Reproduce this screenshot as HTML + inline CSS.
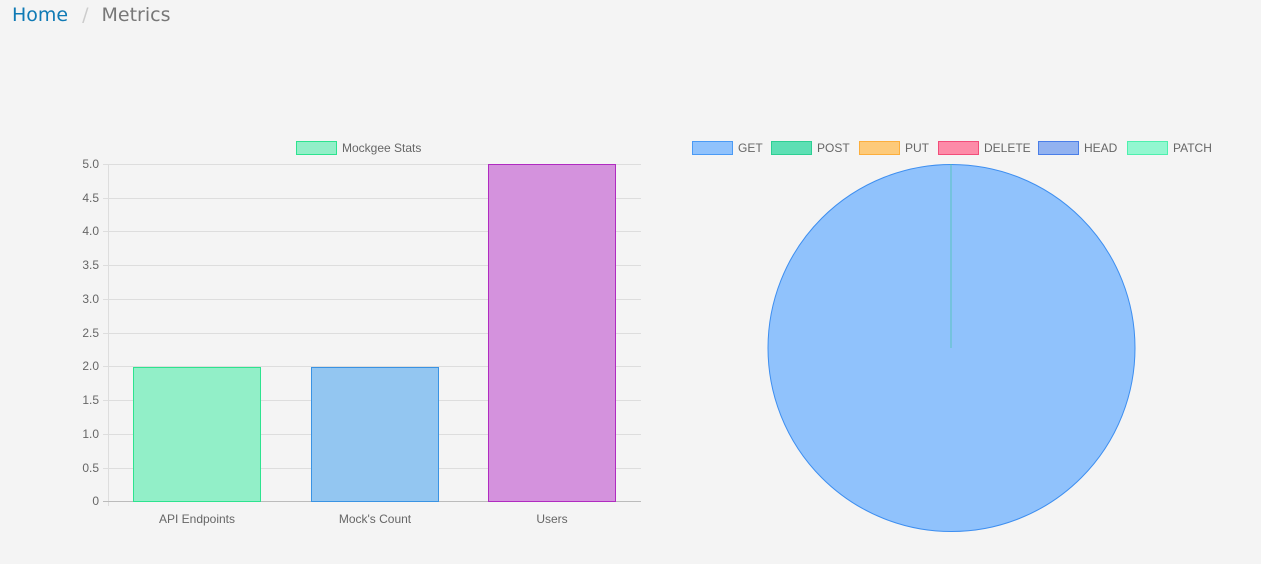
<!DOCTYPE html>
<html><head><meta charset="utf-8"><style>
html,body{margin:0;padding:0;background:#f4f4f4;width:1261px;height:564px;overflow:hidden}
.bc{position:absolute;left:12px;top:4px;font-family:"DejaVu Sans","Liberation Sans",sans-serif;font-size:19px;color:#777}
.bc a{color:#0f7ab5;text-decoration:none}
.bc .s{color:#ccc;margin:0 13px 0 14px}
svg{position:absolute;left:0;top:0}
text{font-family:"Liberation Sans",sans-serif;font-size:12px;fill:#666}
</style></head><body>
<div class="bc"><a>Home</a><span class="s">/</span>Metrics</div>
<svg width="1261" height="564">
<g stroke="#ddd" stroke-width="1">
<line x1="103" y1="164.5" x2="641" y2="164.5"/>
<line x1="103" y1="198.5" x2="641" y2="198.5"/>
<line x1="103" y1="231.5" x2="641" y2="231.5"/>
<line x1="103" y1="265.5" x2="641" y2="265.5"/>
<line x1="103" y1="299.5" x2="641" y2="299.5"/>
<line x1="103" y1="333.5" x2="641" y2="333.5"/>
<line x1="103" y1="366.5" x2="641" y2="366.5"/>
<line x1="103" y1="400.5" x2="641" y2="400.5"/>
<line x1="103" y1="434.5" x2="641" y2="434.5"/>
<line x1="103" y1="468.5" x2="641" y2="468.5"/>
<line x1="108.5" y1="164" x2="108.5" y2="506"/>
</g>
<line x1="103" y1="501.5" x2="641" y2="501.5" stroke="#bbb"/>
<g text-anchor="end">
<text x="99" y="168">5.0</text><text x="99" y="202">4.5</text><text x="99" y="235">4.0</text>
<text x="99" y="269">3.5</text><text x="99" y="303">3.0</text><text x="99" y="337">2.5</text>
<text x="99" y="370">2.0</text><text x="99" y="404">1.5</text><text x="99" y="438">1.0</text>
<text x="99" y="472">0.5</text><text x="99" y="505">0</text>
</g>
<rect x="133.5" y="367.5" width="127" height="134" fill="#92efc8" stroke="#2de38f"/>
<rect x="311.5" y="367.5" width="127" height="134" fill="#93c6f1" stroke="#3a93e3"/>
<rect x="488.5" y="164.5" width="127" height="337" fill="#d492dd" stroke="#b02bc0"/>
<g text-anchor="middle">
<text x="197" y="523">API Endpoints</text><text x="375" y="523">Mock's Count</text><text x="552" y="523">Users</text>
</g>
<rect x="296.5" y="141.5" width="40" height="13" fill="#92efc8" stroke="#2de38f"/>
<text x="342" y="152">Mockgee Stats</text>
<circle cx="951.5" cy="348" r="183.5" fill="#90c2fc" stroke="#3d8ef0" stroke-width="1"/>
<line x1="951" y1="164" x2="951" y2="348" stroke="#4cc4b0" stroke-width="0.8"/>
<rect x="692.5" y="141.5" width="40" height="13" fill="#90c2fc" stroke="#4a9af5"/><text x="738" y="152">GET</text>
<rect x="771.5" y="141.5" width="40" height="13" fill="#5ddfb4" stroke="#2dcf93"/><text x="817" y="152">POST</text>
<rect x="859.5" y="141.5" width="40" height="13" fill="#fdca7a" stroke="#fcae3c"/><text x="905" y="152">PUT</text>
<rect x="938.5" y="141.5" width="40" height="13" fill="#fd8ba8" stroke="#f24d7a"/><text x="984" y="152">DELETE</text>
<rect x="1038.5" y="141.5" width="40" height="13" fill="#92b2f0" stroke="#4a7ee8"/><text x="1084" y="152">HEAD</text>
<rect x="1127.5" y="141.5" width="40" height="13" fill="#92f7d0" stroke="#4ef0ae"/><text x="1173" y="152">PATCH</text>
</svg>
</body></html>
